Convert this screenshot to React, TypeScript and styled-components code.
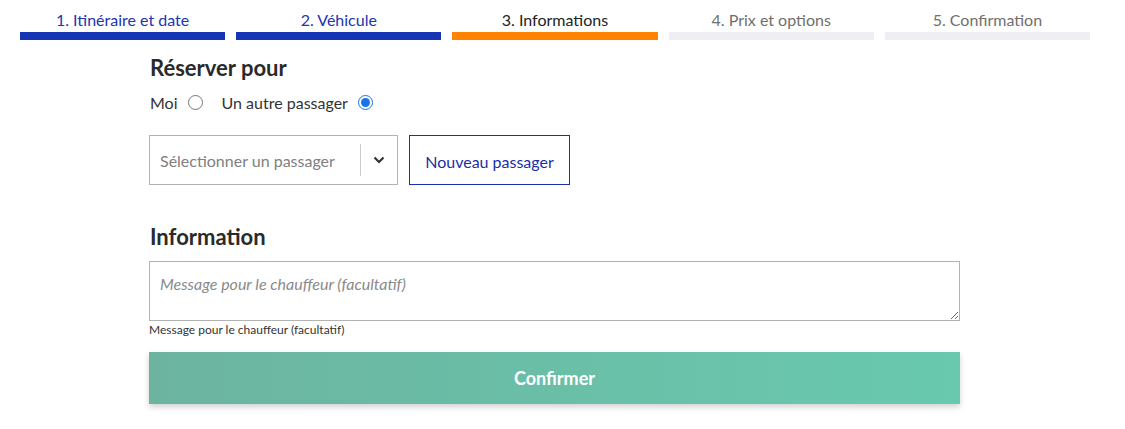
import React from "react";
import styled, { createGlobalStyle } from "styled-components";

const Global = createGlobalStyle`
  html, body { margin: 0; padding: 0; background: #fff; }
  body { font-family: Lato, "Open Sans", sans-serif; color: #222; }
  * { box-sizing: border-box; }
`;

const Page = styled.div`
  width: 1110px;
  padding-top: 11px;
  padding-bottom: 20px;
`;

const Steps = styled.div`
  display: grid;
  grid-template-columns: repeat(5, 1fr);
  column-gap: 11px;
  margin-left: 20px;
  width: 1070px;
`;

type StepState = "done" | "active" | "todo";

const Step = styled.div<{ $state: StepState }>`
  display: flex;
  flex-direction: column;
  align-items: center;
  gap: 3px;
  font-size: 16px;
  line-height: 18px;
  color: ${(p) => (p.$state === "done" ? "#2234b0" : p.$state === "active" ? "#222" : "#6f6f6f")};
  &::after {
    content: "";
    display: block;
    width: 100%;
    height: 8px;
    background: ${(p) => (p.$state === "done" ? "#1535b5" : p.$state === "active" ? "#ff8300" : "#eeeef3")};
  }
`;

const Content = styled.div`
  margin-left: 149px;
  width: 811px;
  display: flex;
  flex-direction: column;
`;

const Heading = styled.h2<{ $top: number }>`
  margin: ${(p) => p.$top}px 0 0 1px;
  font-size: 22px;
  font-weight: 700;
  line-height: 28px;
  color: #2a2a2a;
`;

const RadioRow = styled.div`
  display: flex;
  align-items: center;
  margin-top: 10px;
  height: 20px;
  font-size: 16px;
  color: #333;
`;

const RadioLabel = styled.label`
  display: flex;
  align-items: center;
  gap: 10px;
  margin-left: 1px;
  margin-right: 18px;
`;

const Radio = styled.span<{ $checked?: boolean }>`
  width: 15px;
  height: 15px;
  border-radius: 50%;
  border: 1px solid ${(p) => (p.$checked ? "#1a73e8" : "#767676")};
  display: inline-flex;
  align-items: center;
  justify-content: center;
  &::after {
    content: "";
    width: 9px;
    height: 9px;
    border-radius: 50%;
    background: ${(p) => (p.$checked ? "#1a73e8" : "transparent")};
  }
`;

const PassengerRow = styled.div`
  display: flex;
  gap: 11px;
  margin-top: 23px;
`;

const Select = styled.div`
  width: 249px;
  height: 50px;
  border: 1px solid #b3b3b3;
  display: flex;
  align-items: center;
`;

const SelectText = styled.span`
  flex: 1;
  padding-left: 10px;
  font-size: 16px;
  color: #808080;
`;

const Divider = styled.span`
  width: 1px;
  height: 32px;
  background: #ccc;
`;

const Chevron = styled.span`
  width: 36px;
  display: flex;
  justify-content: center;
  align-items: center;
  color: #333;
`;

const NewButton = styled.button`
  width: 161px;
  height: 50px;
  border: 1px solid #1a30a8;
  background: #fff;
  color: #1a2fa6;
  font-family: Lato, sans-serif;
  font-size: 16px;
  padding: 0;
  padding-top: 2px;
`;

const TextArea = styled.textarea`
  margin-top: 10px;
  width: 811px;
  height: 60px;
  border: 1px solid #b3b3b3;
  padding: 12px 10px;
  font-family: Lato, sans-serif;
  font-size: 16px;
  resize: vertical;
  outline: none;
  &::placeholder {
    color: #8a8a8a;
    font-style: italic;
  }
`;

const Hint = styled.div`
  font-size: 12px;
  line-height: 14px;
  color: #333;
  margin-top: 2px;
`;

const Confirm = styled.button`
  margin-top: 15px;
  width: 811px;
  height: 52px;
  border: none;
  background: linear-gradient(90deg, #6cb4a0 0%, #68c9ae 100%);
  box-shadow: 0 3px 6px rgba(0, 0, 0, 0.18);
  color: #fff;
  font-family: Lato, sans-serif;
  font-size: 18px;
  font-weight: 700;
`;

export default function App() {
  return (
    <Page>
      <Global />
      <Steps>
        <Step $state="done">1. Itinéraire et date</Step>
        <Step $state="done">2. Véhicule</Step>
        <Step $state="active">3. Informations</Step>
        <Step $state="todo">4. Prix et options</Step>
        <Step $state="todo">5. Confirmation</Step>
      </Steps>
      <Content>
        <Heading $top={14}>Réserver pour</Heading>
        <RadioRow>
          <RadioLabel>
            Moi <Radio />
          </RadioLabel>
          <RadioLabel>
            Un autre passager <Radio $checked />
          </RadioLabel>
        </RadioRow>
        <PassengerRow>
          <Select>
            <SelectText>Sélectionner un passager</SelectText>
            <Divider />
            <Chevron>
              <svg width="12" height="8" viewBox="0 0 12 8">
                <path d="M1.5 1.5 L6 6 L10.5 1.5" fill="none" stroke="#333" strokeWidth="2.2" />
              </svg>
            </Chevron>
          </Select>
          <NewButton>Nouveau passager</NewButton>
        </PassengerRow>
        <Heading $top={38}>Information</Heading>
        <TextArea placeholder="Message pour le chauffeur (facultatif)" />
        <Hint>Message pour le chauffeur (facultatif)</Hint>
        <Confirm>Confirmer</Confirm>
      </Content>
    </Page>
  );
}
